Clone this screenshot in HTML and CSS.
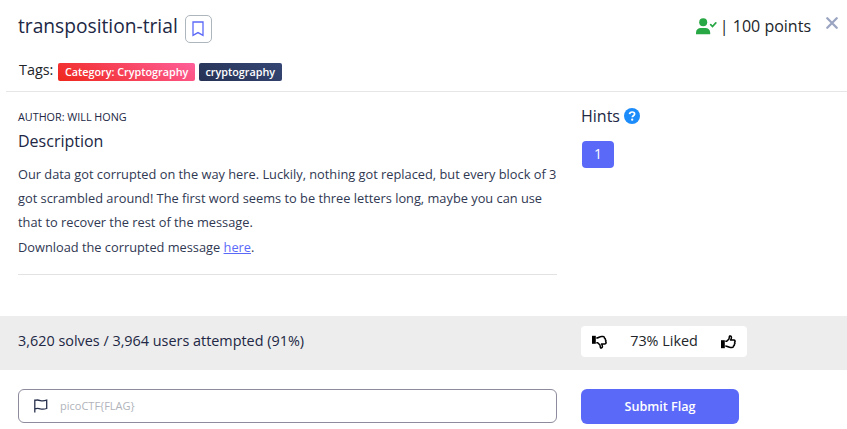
FILE: index.html
```html
<!DOCTYPE html>
<html lang="en">
<head>
<meta charset="utf-8">
<title>transposition-trial</title>
<link rel="stylesheet" href="styles.css">
</head>
<body>
<main class="modal">
  <header class="header">
    <div class="title-row">
      <h1 class="title">transposition-trial</h1>
      <button class="bookmark" aria-label="Bookmark"><svg width="12" height="16" viewBox="0 0 12 16"><path d="M1 1h10v13.3L6 11.600 1 14.300z" fill="none" stroke="#5b69f8" stroke-width="1.300"/></svg></button>
      <div class="points">
        <svg class="solved" width="21" height="17" viewBox="0 0 21 17"><circle cx="7.200" cy="4.300" r="4"/><path d="M0 16.200v-1.500c0-3 2.200-4.600 4.700-4.600h4.800c2.600 0 4.700 1.700 4.700 4.600v1.500z"/><path class="tick" d="M14.700 6.700l1.800 1.800 3.300-3.600"/></svg>
        <span>| 100 points</span>
      </div>
      <button class="close" aria-label="Close"><svg width="12" height="12" viewBox="0 0 12 12"><path d="M1.300 1.300l9.400 9.400M10.700 1.300l-9.400 9.400" stroke="#9ba5c2" stroke-width="2.300" stroke-linecap="round"/></svg></button>
    </div>
    <div class="tags"><span class="tags-label">Tags:</span><span class="tag category">Category: Cryptography</span><span class="tag topic">cryptography</span></div>
  </header>
  <div class="columns body">
    <section class="info">
      <div class="author">AUTHOR: WILL HONG</div>
      <h2 class="subtitle">Description</h2>
      <p class="text">Our data got corrupted on the way here. Luckily, nothing got replaced, but every block of 3<br>got scrambled around! The first word seems to be three letters long, maybe you can use<br>that to recover the rest of the message.</p>
      <p class="text download">Download the corrupted message <a href="#">here</a>.</p>
    </section>
    <aside class="hints">
      <div class="hints-title">Hints <svg width="16" height="16" viewBox="0 0 16 16"><circle cx="8" cy="8" r="8" fill="#1c8cfa"/><path d="M5.500 6.200c.3-1.500 1.200-2.200 2.600-2.200 1.500 0 2.500.8 2.500 2 0 1.700-2.300 1.700-2.300 3.300" fill="none" stroke="#fff" stroke-width="1.700"/><circle cx="8.200" cy="11.700" r="1.150" fill="#fff"/></svg></div>
      <button class="hint">1</button>
    </aside>
  </div>
  <div class="columns stats">
    <div class="solves">3,620 solves / 3,964 users attempted (91%)</div>
    <div class="rating">
      <svg width="15" height="14" viewBox="0 0 15 14"><g transform="matrix(1 0 0 -1 0 14)"><path d="M0 5.200h3.800v8H0z"/><path class="thumb" d="M4.300 6.300h1.400L8 3.900l.4-2.400c.2-1 1.800-.6 2 .6.200 1-.3 2-.8 3h3.100c1.600 0 1.800 1.500.9 2.100.6.700.4 1.500-.3 1.900.3.800 0 1.500-.8 1.800.1 1-.5 1.600-1.500 1.600H9.500c-2 0-2.900-1.500-5.200-1.500"/></g></svg>
      <span>73% Liked</span>
      <svg width="15" height="14" viewBox="0 0 15 14"><path d="M0 5.200h3.800v8H0z"/><path class="thumb" d="M4.300 6.300h1.400L8 3.900l.4-2.400c.2-1 1.800-.6 2 .6.200 1-.3 2-.8 3h3.100c1.600 0 1.800 1.500.9 2.100.6.700.4 1.500-.3 1.900.3.800 0 1.500-.8 1.800.1 1-.5 1.600-1.500 1.600H9.500c-2 0-2.900-1.500-5.200-1.500"/></svg>
    </div>
  </div>
  <form class="columns submit">
    <label class="field">
      <svg width="14" height="14" viewBox="0 0 14 14"><path d="M.8.500v13M.8 1.400c2.300-.8 3.700-.5 5.600.2 2.300.8 4 .4 6.300-.4v8.300c-2.300.8-4 1-6.300.3-2-.7-3.300-.9-5.600 0" fill="none" stroke="#27304d" stroke-width="1.300"/></svg>
      <input type="text" placeholder="picoCTF{FLAG}">
    </label>
    <button type="button" class="send">Submit Flag</button>
  </form>
</main>
</body>
</html>
```
FILE: styles.css
```css
* { box-sizing: border-box; }
body { margin: 0; background: #fff; color: #212744; font-family: "Open Sans", sans-serif; font-size: 16px; }
h1, h2, p { margin: 0; font-weight: 400; }
button { padding: 0; border: 0; background: none; font-family: inherit; }
svg { display: block; flex: none; }
.modal { height: 429px; overflow: hidden; }
.header { height: 92px; margin-left: 6px; padding-left: 12px; border-bottom: 1px solid #e6e6e8; }
.title-row { display: flex; align-items: flex-start; height: 58px; }
.title { font-size: 19.200px; line-height: 28px; margin-top: 12px; }
.bookmark { width: 27px; height: 28px; margin: 15px 0 0 7px; border: 1px solid #adb5bd; border-radius: 5px; display: flex; align-items: center; justify-content: center; }
.points { display: flex; margin: 15px 15px 0 auto; line-height: 22px; gap: 3px; color: #212529; }
.solved { margin-top: 3px; fill: #28a745; }
.tick { fill: none; stroke: #28a745; stroke-width: 1.700; stroke-linecap: round; }
.close { margin: 17px 9px 0 0; }
.tags { display: flex; align-items: flex-start; }
.tags-label { font-size: 14.400px; line-height: 20px; margin: 2px 5px 0 1px; color: #212529; }
.tag { height: 18px; margin: 5px 4px 0 0; padding: 0 6.500px; border-radius: 2px; color: #fff; font-size: 10.800px; font-weight: 600; line-height: 18px; }
.category { background: linear-gradient(30deg, #ef271b, #ff5f9b); }
.topic { background: linear-gradient(30deg, #263254, #354675); }
.columns { display: grid; grid-template-columns: 539px 1fr; column-gap: 24px; padding-left: 18px; }
.body { height: 224px; }
.info { height: 183px; border-bottom: 1px solid #e2e2e4; }
.author { font-size: 10.800px; line-height: 16px; margin-top: 17px; }
.subtitle { font-size: 16px; line-height: 22px; margin-top: 5px; }
.text { font-size: 12.800px; line-height: 24px; margin-top: 10px; color: #303852; }
.download { margin-top: 1px; }
.text a { color: #5b69f8; }
.hints-title { display: flex; align-items: center; gap: 4px; line-height: 22px; margin-top: 13px; }
.hint { width: 32px; height: 27px; margin: 14px 0 0 1px; padding-bottom: 2px; border-radius: 4px; background: #5b69f8; color: #fff; font-size: 14px; }
.stats { height: 54px; background: #ededed; align-items: start; }
.solves { font-size: 14.400px; line-height: 20px; margin-top: 15px; }
.rating { width: 166px; height: 31px; margin-top: 10px; padding: 0 11px; border-radius: 4px; background: #fff; color: #212529; font-size: 14.400px; display: flex; align-items: center; justify-content: space-between; }
.rating span { padding-bottom: 2px; }
.thumb { fill: none; stroke: #000; stroke-width: 1.500; stroke-linejoin: round; }
.submit { margin-top: 19px; }
.field { height: 34px; border: 1px solid #8d8b9d; border-radius: 6px; display: flex; align-items: center; padding-left: 15px; gap: 12px; }
.field input { flex: 1; border: 0; outline: 0; padding: 0 0 1px; background: none; font: 11px "Open Sans", sans-serif; }
.field input::placeholder { color: #b0b3ba; }
.send { width: 158px; height: 35px; padding-bottom: 1px; border-radius: 6px; background: #5b69f8; color: #fff; font-size: 12.600px; font-weight: 600; }
```
